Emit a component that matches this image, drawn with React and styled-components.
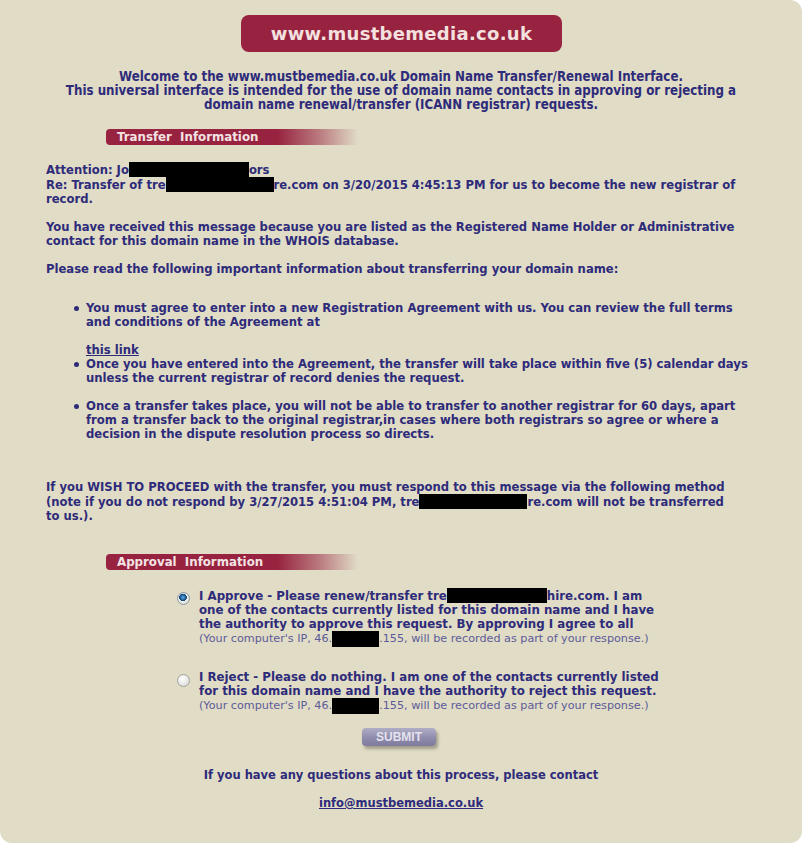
import React from 'react'
import styled, { createGlobalStyle } from 'styled-components';

const GlobalStyle = createGlobalStyle`
body {
    margin: 0;
    background: #fff;
}
`;

const App = () => {
    return (
        <>
            <GlobalStyle />
            <Panel>
                <HeaderWrap>
                    <SiteTitle>www.mustbemedia.co.uk</SiteTitle>
                </HeaderWrap>

                <Intro>
                    Welcome to the www.mustbemedia.co.uk Domain Name Transfer/Renewal Interface.<br />
                    This universal interface is intended for the use of domain name contacts in approving or rejecting a<br />
                    domain name renewal/transfer (ICANN registrar) requests.
                </Intro>

                <SectionBar>Transfer&nbsp; Information</SectionBar>

                <Para $top={17}>
                    Attention: Jo<Redact $w={120} />ors<br />
                    Re: Transfer of tre<Redact $w={108} />re.com on 3/20/2015 4:45:13 PM for us to become the new registrar of<br />
                    record.
                </Para>

                <Para $top={14}>
                    You have received this message because you are listed as the Registered Name Holder or Administrative<br />
                    contact for this domain name in the WHOIS database.
                </Para>

                <Para $top={14}>
                    Please read the following important information about transferring your domain name:
                </Para>

                <List>
                    <Item>
                        You must agree to enter into a new Registration Agreement with us. You can review the full terms<br />
                        and conditions of the Agreement at<br />
                        <br />
                        <TextLink href="#">this link</TextLink>
                    </Item>
                    <Item>
                        Once you have entered into the Agreement, the transfer will take place within five (5) calendar days<br />
                        unless the current registrar of record denies the request.
                    </Item>
                    <Item $gap>
                        Once a transfer takes place, you will not be able to transfer to another registrar for 60 days, apart<br />
                        from a transfer back to the original registrar,in cases where both registrars so agree or where a<br />
                        decision in the dispute resolution process so directs.
                    </Item>
                </List>

                <Para $top={39}>
                    If you WISH TO PROCEED with the transfer, you must respond to this message via the following method<br />
                    (note if you do not respond by 3/27/2015 4:51:04 PM, tre<Redact $w={108} />re.com will not be transferred<br />
                    to us.).
                </Para>

                <SectionBar $top={31}>Approval&nbsp; Information</SectionBar>

                <Choices>
                    <Choice $top={18}>
                        <Radio type="radio" name="answer" defaultChecked />
                        <ChoiceText>
                            I Approve - Please renew/transfer tre<Redact $w={100} />hire.com. I am<br />
                            one of the contacts currently listed for this domain name and I have<br />
                            the authority to approve this request. By approving I agree to all
                            <Note>(Your computer's IP, 46.<Redact $w={47} $small />.155, will be recorded as part of your response.)</Note>
                        </ChoiceText>
                    </Choice>
                    <Choice $top={23}>
                        <Radio type="radio" name="answer" />
                        <ChoiceText>
                            I Reject - Please do nothing. I am one of the contacts currently listed<br />
                            for this domain name and I have the authority to reject this request.
                            <Note>(Your computer's IP, 46.<Redact $w={47} $small />.155, will be recorded as part of your response.)</Note>
                        </ChoiceText>
                    </Choice>
                </Choices>

                <SubmitRow>
                    <SubmitButton type="button">SUBMIT</SubmitButton>
                </SubmitRow>

                <Footer>
                    <FooterLine>If you have any questions about this process, please contact</FooterLine>
                    <FooterLine $top={14}><TextLink href="#">info@mustbemedia.co.uk</TextLink></FooterLine>
                </Footer>
            </Panel>
        </>
    )
}

export default App


const ink = '#2e2b7a';

const Panel = styled.div`
width: 802px;
height: 843px;
box-sizing: border-box;
background-color: #e0dcc6;
border-radius: 0 12px 12px 12px;
padding-top: 15px;
color: ${ink};
`;

const HeaderWrap = styled.div`
display: flex;
justify-content: center;
`;

const SiteTitle = styled.div`
width: 321px;
height: 37px;
margin-left: 1px;
display: flex;
align-items: center;
justify-content: center;
background-color: #982340;
border-radius: 8px;
color: #f3e0df;
font-family: "DejaVu Sans", Verdana, sans-serif;
font-weight: bold;
font-size: 18px;
letter-spacing: 0.3px;
`;

const Intro = styled.p`
margin: 18px 0 0;
text-align: center;
font-family: "DejaVu Sans Condensed", Tahoma, sans-serif;
font-weight: bold;
font-size: 13.2px;
line-height: 14px;
`;

const SectionBar = styled.div`
margin: ${props => props.$top || 17}px 0 0 106px;
width: 241px;
height: 16px;
padding-left: 11px;
display: flex;
align-items: center;
border-radius: 4px 0 0 4px;
background: linear-gradient(to right, #982340 0%, #982340 68%, rgba(152, 35, 64, 0.55) 84%, rgba(224, 220, 198, 0) 100%);
color: #f3e3e3;
font-family: "DejaVu Sans", Verdana, sans-serif;
font-weight: bold;
font-size: 11.8px;
`;

const Para = styled.p`
margin: ${props => props.$top}px 0 0;
padding: 0 30px 0 46px;
font-family: "DejaVu Sans Condensed", Tahoma, sans-serif;
font-weight: bold;
font-size: 12.9px;
line-height: 14px;
`;

const Redact = styled.span`
display: inline-block;
width: ${props => props.$w}px;
height: ${props => props.$small ? 16 : 15}px;
background: #000;
vertical-align: ${props => props.$small ? '-5px' : '-3px'};
`;

const List = styled.ul`
margin: 25px 0 0;
padding: 0 30px 0 86px;
font-family: "DejaVu Sans", Verdana, sans-serif;
font-weight: bold;
font-size: 11.65px;
line-height: 14px;
`;

const Item = styled.li`
margin-top: ${props => props.$gap ? 14 : 0}px;
list-style: none;
position: relative;
&::before {
    content: '';
    position: absolute;
    left: -12px;
    top: 5px;
    width: 5px;
    height: 5px;
    border-radius: 50%;
    background: ${ink};
}
`;

const TextLink = styled.a`
color: ${ink};
text-decoration: underline;
`;

const Choices = styled.div`
display: flex;
flex-direction: column;
`;

const Choice = styled.div`
margin-top: ${props => props.$top}px;
padding-left: 177px;
display: flex;
align-items: flex-start;
gap: 9px;
`;

const Radio = styled.input`
appearance: none;
margin: 4px 0 0;
width: 13px;
height: 13px;
flex-shrink: 0;
border-radius: 50%;
border: 1px solid #a4a49e;
box-sizing: border-box;
background: radial-gradient(circle at 40% 35%, #ffffff 0%, #e6e6e2 60%, #cfcfca 100%);
&:checked {
    border-color: #8e9aa6;
    background:
        radial-gradient(circle at 45% 40%, #6fb3e6 0, #2a6fae 2px, #123f6c 3.6px, transparent 4px),
        radial-gradient(circle at 40% 35%, #ffffff 0%, #e6e6e2 60%, #cfcfca 100%);
}
`;

const ChoiceText = styled.div`
font-family: "DejaVu Sans", Verdana, sans-serif;
font-weight: bold;
font-size: 11.8px;
line-height: 14px;
`;

const Note = styled.div`
font-family: "DejaVu Sans", Verdana, sans-serif;
font-weight: normal;
font-size: 11.2px;
line-height: 12px;
color: #5d5b99;
`;

const SubmitRow = styled.div`
margin-top: 13px;
padding-left: 362px;
`;

const SubmitButton = styled.button`
width: 74px;
height: 18px;
padding: 0;
border: none;
border-radius: 4px;
background: linear-gradient(to bottom, #b0adc6 0%, #8f8bad 55%, #7f7b9e 100%);
box-shadow: 2px 3px 3px rgba(90, 85, 70, 0.45);
color: #e4e3ee;
font-family: "Liberation Sans", Arial, sans-serif;
font-weight: bold;
font-size: 12px;
`;

const Footer = styled.div`
margin-top: 22px;
text-align: center;
font-family: "DejaVu Sans", Verdana, sans-serif;
font-weight: bold;
font-size: 11.5px;
line-height: 14px;
`;

const FooterLine = styled.div`
margin-top: ${props => props.$top || 0}px;
`;
